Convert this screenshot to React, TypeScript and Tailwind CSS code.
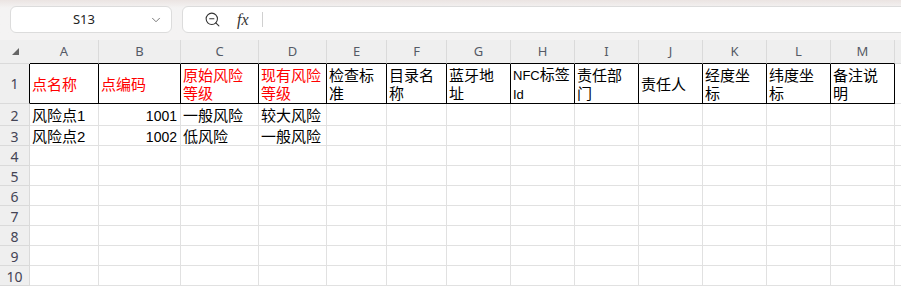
import type { ReactNode } from "react";
import { ChevronDown, ZoomOut } from "lucide-react";

const cols = [
  { key: "A", w: "w-[69px]" },
  { key: "B", w: "w-[82px]" },
  { key: "C", w: "w-[78px]" },
  { key: "D", w: "w-[68px]" },
  { key: "E", w: "w-[60px]" },
  { key: "F", w: "w-[60px]" },
  { key: "G", w: "w-[64px]" },
  { key: "H", w: "w-[64px]" },
  { key: "I", w: "w-[64px]" },
  { key: "J", w: "w-[64px]" },
  { key: "K", w: "w-[64px]" },
  { key: "L", w: "w-[64px]" },
  { key: "M", w: "w-[64px]" },
  { key: "", w: "w-[64px]" },
];

const header: { text: ReactNode; red?: boolean }[] = [
  { text: "点名称", red: true },
  { text: "点编码", red: true },
  { text: "原始风险\n等级", red: true },
  { text: "现有风险\n等级", red: true },
  { text: "检查标\n准" },
  { text: "目录名\n称" },
  { text: "蓝牙地\n址" },
  {
    text: (
      <>
        <span className="text-[13px]">NFC</span>标签{"\n"}
        <span className="text-[13px]">Id</span>
      </>
    ),
  },
  { text: "责任部\n门" },
  { text: "责任人" },
  { text: "经度坐\n标" },
  { text: "纬度坐\n标" },
  { text: "备注说\n明" },
];

const data: { cells: string[]; h: string }[] = [
  { cells: ["风险点1", "1001", "一般风险", "较大风险"], h: "h-[22px]" },
  { cells: ["风险点2", "1002", "低风险", "一般风险"], h: "h-[20px]" },
  { cells: [], h: "h-[20px]" },
  { cells: [], h: "h-[20px]" },
  { cells: [], h: "h-[20px]" },
  { cells: [], h: "h-[20px]" },
  { cells: [], h: "h-[20px]" },
  { cells: [], h: "h-[20px]" },
  { cells: [], h: "h-[20px]" },
];

export default function App() {
  return (
    <div className="w-[901px] h-[287px] overflow-hidden bg-white font-['Liberation_Sans','Noto_Sans_CJK_SC',sans-serif] text-black">
      {/* Toolbar */}
      <div className="h-[40px] bg-gradient-to-b from-[#ebe4e2] from-[0px] to-[#f4f3f3] to-[8px] flex items-start pt-[6px] pl-[10px] gap-[10px]">
        <div className="w-[162px] h-[27px] bg-white border border-[#dcdcdc] rounded-[6px] flex items-center shrink-0">
          <span className="flex-1 text-center pl-[8px] text-[13px] text-[#222] font-['Noto_Sans',sans-serif]">S13</span>
          <ChevronDown className="w-[14px] h-[14px] text-[#666] mr-[8px]" strokeWidth={1.5} />
        </div>
        <div className="flex-1 -mr-[12px] h-[27px] bg-white border border-[#dcdcdc] rounded-[6px] flex items-center">
          <ZoomOut className="w-[17px] h-[17px] ml-[21px] text-[#333]" strokeWidth={1.5} />
          <span className="ml-[16px] text-[16px] italic text-[#333] font-['Liberation_Serif',serif]">fx</span>
          <div className="ml-[13px] w-px h-[15px] bg-[#d0d0d0]" />
        </div>
      </div>

      {/* Column headers */}
      <div className="flex h-[24px] bg-[#efefef]">
        <div className="w-[30px] shrink-0 flex items-center justify-center border-b border-[#dadada]">
          <div className="w-0 h-0 border-l-[7px] border-l-transparent border-b-[7px] border-b-[#666] ml-[1px]" />
        </div>
        {cols.map((c, i) => (
          <div
            key={i}
            className={`${c.w} shrink-0 flex items-center justify-center border-r border-[#dadada] text-[13px] text-[#555a66] font-['Noto_Sans',sans-serif] pt-px ${i < 13 ? "border-b border-b-black" : "border-b border-b-[#dadada]"}`}
          >
            {c.key}
          </div>
        ))}
      </div>

      {/* Row 1 */}
      <div className="flex h-[40px]">
        <div className="w-[30px] shrink-0 bg-[#efefef] flex items-center justify-center text-[14px] text-[#445] border-r border-r-black border-b border-b-[#dadada] font-['Noto_Sans',sans-serif]">
          1
        </div>
        {cols.map((c, i) => {
          const h = header[i];
          return (
            <div
              key={i}
              className={`${c.w} shrink-0 flex items-center pl-[2px] pt-[2px] whitespace-pre-line leading-[18px] text-[15px] overflow-hidden ${i < 13 ? "border-r border-b border-black" : "border-r border-b border-[#e1e1e1]"} ${h?.red ? "text-[#ff0000]" : "text-black"}`}
            >
              <div>{h?.text}</div>
            </div>
          );
        })}
      </div>

      {/* Data rows */}
      {data.map((r, ri) => (
        <div key={ri} className={`flex ${r.h}`}>
          <div className="w-[30px] shrink-0 bg-[#efefef] flex items-center justify-center text-[14px] text-[#445] border-r border-[#dadada] border-b font-['Noto_Sans',sans-serif] pt-px">
            {ri + 2}
          </div>
          {cols.map((c, i) => (
            <div
              key={i}
              className={`${c.w} shrink-0 flex items-center pt-[2px] px-[2px] leading-[18px] whitespace-nowrap overflow-hidden border-r border-b border-[#e1e1e1] ${i === 1 ? "justify-end text-[14px] pr-[3px]" : "text-[15px]"}`}
            >
              {r.cells[i]}
            </div>
          ))}
        </div>
      ))}
    </div>
  );
}
